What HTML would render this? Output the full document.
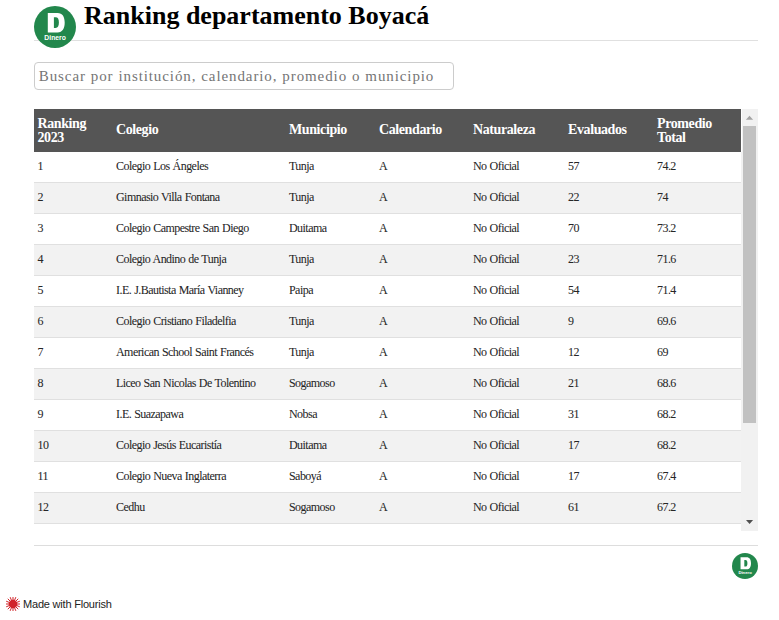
<!DOCTYPE html>
<html><head><meta charset="utf-8">
<style>
html,body{margin:0;padding:0;background:#fff;width:779px;height:620px;overflow:hidden;position:relative;font-family:"Liberation Serif",serif;}
.abs{position:absolute;}
.logo{position:absolute;left:34px;top:6px;width:42px;height:42px;}
.title{position:absolute;left:84px;top:0px;font-size:26px;font-weight:bold;color:#000;line-height:32px;white-space:nowrap;}
.hr1{position:absolute;left:34px;top:40px;width:724px;height:1px;background:#e0e0e0;}
.search{position:absolute;left:34px;top:62px;width:418px;height:26px;border:1px solid #ccc;border-radius:4px;box-sizing:content-box;}
.search span{position:absolute;left:3.8px;top:4px;font-size:15px;letter-spacing:0.9px;word-spacing:0.3px;color:#757575;white-space:nowrap;line-height:18px;}
.table{position:absolute;left:34px;top:109px;width:707px;height:422px;overflow:hidden;}
.thead{position:absolute;left:0;top:0;width:707px;height:43px;background:#555;color:#fff;font-weight:bold;font-size:14px;letter-spacing:-0.4px;}
.th{position:absolute;top:0px;height:43px;display:flex;align-items:center;line-height:14px;}
.th.s{top:-1px}
.row{position:absolute;left:0;width:707px;height:30px;border-bottom:1px solid #e0e0e0;color:#262626;font-size:12px;letter-spacing:-0.55px;word-spacing:0.6px;-webkit-text-stroke:0.05px #262626;}
.row.g{background:#f2f2f2;}
.td{position:absolute;top:-1px;line-height:30px;white-space:nowrap;}
.c0{left:3.5px}.c1{left:82px}.c2{left:255px}.c3{left:345px}.c4{left:439px}.c5{left:534px}.c6{left:623px}
.sb{position:absolute;left:741px;top:109px;width:17px;height:422px;background:#f1f1f1;}
.sbw{position:absolute;left:0;top:0;width:1px;height:43px;background:#fff;}
.thumb{position:absolute;left:2px;top:17px;width:13px;height:297px;background:#c1c1c1;}
.hr2{position:absolute;left:34px;top:545px;width:724px;height:1px;background:#ddd;}
.logo2{position:absolute;left:732px;top:553px;width:26px;height:26px;}
.fl{position:absolute;left:6px;top:597px;display:block}
.flour{position:absolute;left:23px;top:597px;font-family:"Liberation Sans",sans-serif;font-size:11px;letter-spacing:-0.2px;color:#222;line-height:14px;white-space:nowrap;}
</style></head><body>
<div class="hr1"></div>
<div class="logo"><svg viewBox="0 0 42 42" width="100%" height="100%" style="display:block"><circle cx="21" cy="21" r="21" fill="#22874c"/><path fill="#fff" fill-rule="evenodd" d="M13.8 6.9H23.6C28.4 6.9 30.7 10.6 30.7 16.6C30.7 22.7 28.4 26.4 23.6 26.4H13.8ZM19.9 11.3V22H21.6C23.9 22 24.9 20.2 24.9 16.6C24.9 13.1 23.9 11.3 21.6 11.3Z"/><text x="21.1" y="34" text-anchor="middle" font-family="Liberation Sans" font-weight="bold" font-size="6.8" fill="#fff">Dinero</text></svg></div>
<div class="title">Ranking departamento Boyacá</div>
<div class="search"><span>Buscar por institución, calendario, promedio o municipio</span></div>

<div class="table">
  <div class="thead">
    <div class="th c0">Ranking<br>2023</div>
    <div class="th s c1">Colegio</div>
    <div class="th s c2">Municipio</div>
    <div class="th s c3">Calendario</div>
    <div class="th s c4">Naturaleza</div>
    <div class="th s c5">Evaluados</div>
    <div class="th c6">Promedio<br>Total</div>
  </div>
  <div class="row" style="top:43px"><div class="td c0">1</div><div class="td c1">Colegio Los Ángeles</div><div class="td c2">Tunja</div><div class="td c3">A</div><div class="td c4">No Oficial</div><div class="td c5">57</div><div class="td c6">74.2</div></div>
  <div class="row g" style="top:74px"><div class="td c0">2</div><div class="td c1">Gimnasio Villa Fontana</div><div class="td c2">Tunja</div><div class="td c3">A</div><div class="td c4">No Oficial</div><div class="td c5">22</div><div class="td c6">74</div></div>
  <div class="row" style="top:105px"><div class="td c0">3</div><div class="td c1">Colegio Campestre San Diego</div><div class="td c2">Duitama</div><div class="td c3">A</div><div class="td c4">No Oficial</div><div class="td c5">70</div><div class="td c6">73.2</div></div>
  <div class="row g" style="top:136px"><div class="td c0">4</div><div class="td c1">Colegio Andino de Tunja</div><div class="td c2">Tunja</div><div class="td c3">A</div><div class="td c4">No Oficial</div><div class="td c5">23</div><div class="td c6">71.6</div></div>
  <div class="row" style="top:167px"><div class="td c0">5</div><div class="td c1">I.E. J.Bautista María Vianney</div><div class="td c2">Paipa</div><div class="td c3">A</div><div class="td c4">No Oficial</div><div class="td c5">54</div><div class="td c6">71.4</div></div>
  <div class="row g" style="top:198px"><div class="td c0">6</div><div class="td c1">Colegio Cristiano Filadelfia</div><div class="td c2">Tunja</div><div class="td c3">A</div><div class="td c4">No Oficial</div><div class="td c5">9</div><div class="td c6">69.6</div></div>
  <div class="row" style="top:229px"><div class="td c0">7</div><div class="td c1">American School Saint Francés</div><div class="td c2">Tunja</div><div class="td c3">A</div><div class="td c4">No Oficial</div><div class="td c5">12</div><div class="td c6">69</div></div>
  <div class="row g" style="top:260px"><div class="td c0">8</div><div class="td c1">Liceo San Nicolas De Tolentino</div><div class="td c2">Sogamoso</div><div class="td c3">A</div><div class="td c4">No Oficial</div><div class="td c5">21</div><div class="td c6">68.6</div></div>
  <div class="row" style="top:291px"><div class="td c0">9</div><div class="td c1">I.E. Suazapawa</div><div class="td c2">Nobsa</div><div class="td c3">A</div><div class="td c4">No Oficial</div><div class="td c5">31</div><div class="td c6">68.2</div></div>
  <div class="row g" style="top:322px"><div class="td c0">10</div><div class="td c1">Colegio Jesús Eucaristía</div><div class="td c2">Duitama</div><div class="td c3">A</div><div class="td c4">No Oficial</div><div class="td c5">17</div><div class="td c6">68.2</div></div>
  <div class="row" style="top:353px"><div class="td c0">11</div><div class="td c1">Colegio Nueva Inglaterra</div><div class="td c2">Saboyá</div><div class="td c3">A</div><div class="td c4">No Oficial</div><div class="td c5">17</div><div class="td c6">67.4</div></div>
  <div class="row g" style="top:384px"><div class="td c0">12</div><div class="td c1">Cedhu</div><div class="td c2">Sogamoso</div><div class="td c3">A</div><div class="td c4">No Oficial</div><div class="td c5">61</div><div class="td c6">67.2</div></div>
</div>

<div class="sb"><div class="sbw"></div><svg width="17" height="422" style="position:absolute;left:0;top:0"><polygon points="4.9,10.8 12.1,10.8 8.5,6.7" fill="#a3a3a3"/><polygon points="5,411 12.1,411 8.55,415" fill="#505050"/></svg><div class="thumb"></div></div>
<div class="hr2"></div>
<div class="logo2"><svg viewBox="0 0 42 42" width="100%" height="100%" style="display:block"><circle cx="21" cy="21" r="21" fill="#22874c"/><path fill="#fff" fill-rule="evenodd" d="M13.8 6.9H23.6C28.4 6.9 30.7 10.6 30.7 16.6C30.7 22.7 28.4 26.4 23.6 26.4H13.8ZM19.9 11.3V22H21.6C23.9 22 24.9 20.2 24.9 16.6C24.9 13.1 23.9 11.3 21.6 11.3Z"/><text x="21.1" y="34" text-anchor="middle" font-family="Liberation Sans" font-weight="bold" font-size="6.8" fill="#fff">Dinero</text></svg></div>
<svg class="fl" viewBox="0 0 14 14" width="14" height="14"><circle cx="7" cy="7" r="4.3" fill="#d1242a"/><path d="M10.50 7.00L14.00 7.00M10.23 8.34L13.47 9.68M9.47 9.47L11.95 11.95M8.34 10.23L9.68 13.47M7.00 10.50L7.00 14.00M5.66 10.23L4.32 13.47M4.53 9.47L2.05 11.95M3.77 8.34L0.53 9.68M3.50 7.00L0.00 7.00M3.77 5.66L0.53 4.32M4.53 4.53L2.05 2.05M5.66 3.77L4.32 0.53M7.00 3.50L7.00 0.00M8.34 3.77L9.68 0.53M9.47 4.53L11.95 2.05M10.23 5.66L13.47 4.32" stroke="#d1242a" stroke-width="1" stroke-linecap="round"/></svg>
<div class="flour">Made with Flourish</div>
</body></html>
